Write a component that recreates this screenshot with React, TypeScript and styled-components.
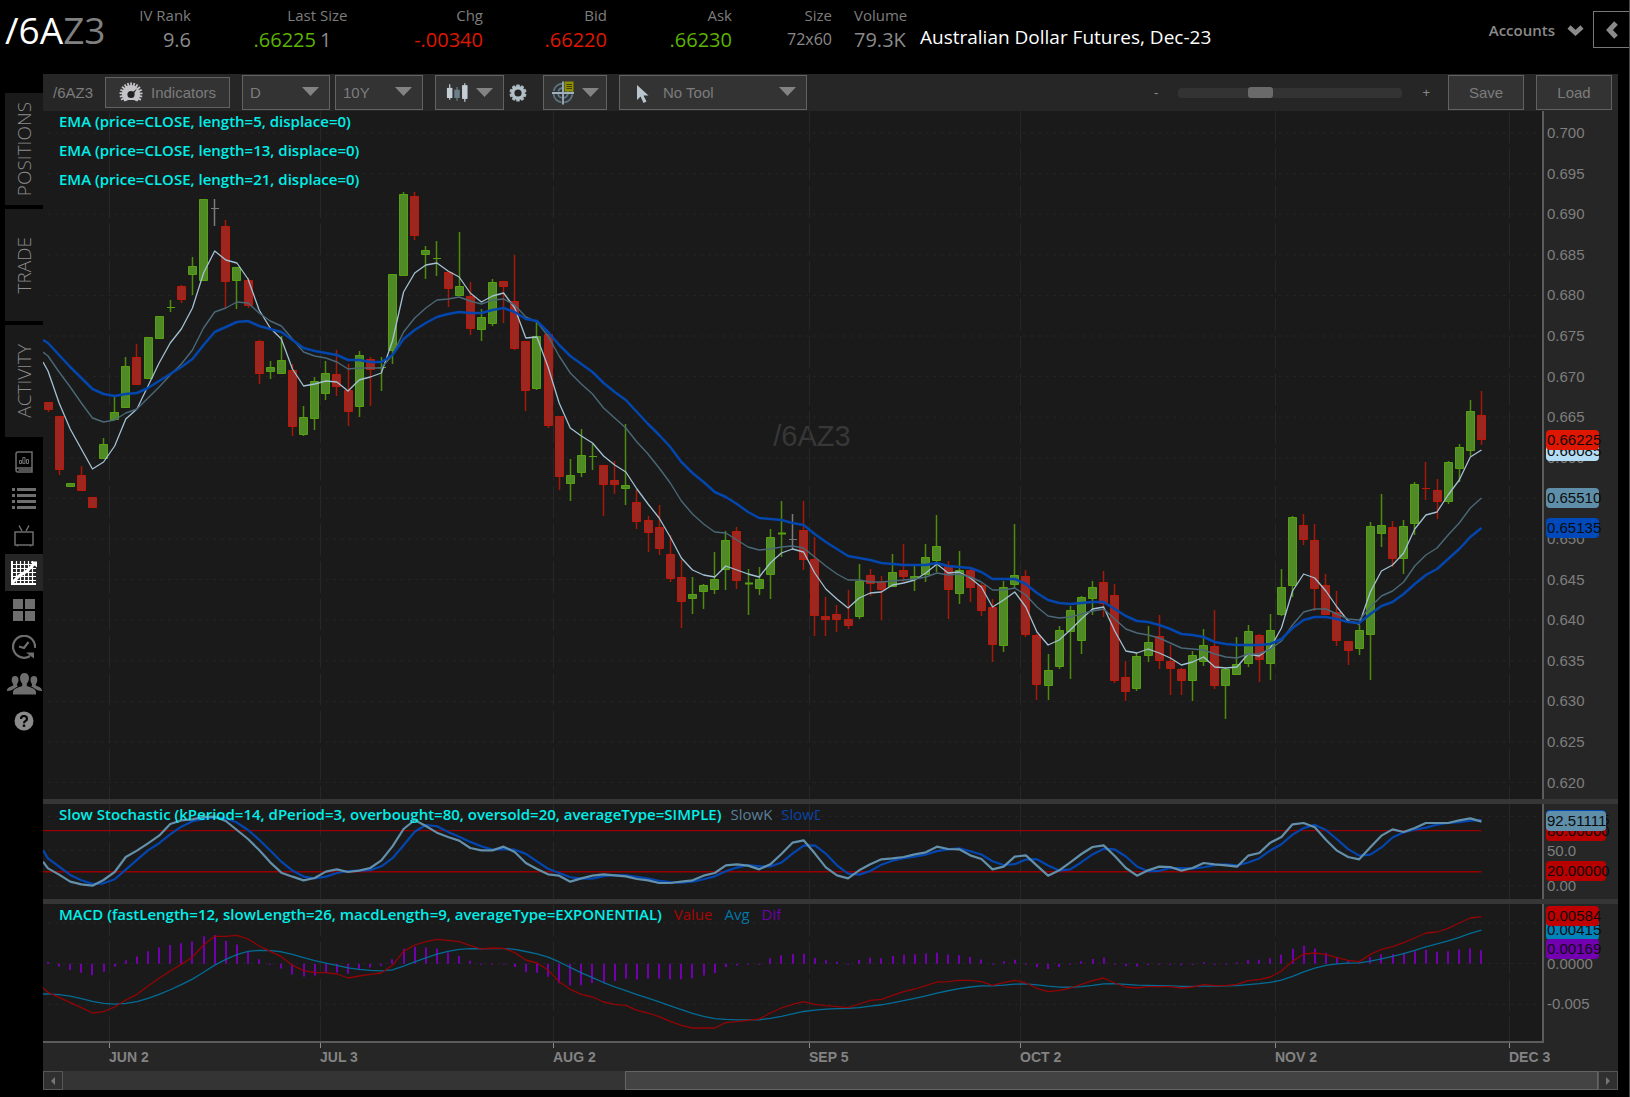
import React from "react";
import styled, { createGlobalStyle } from "styled-components";

/* ---------- data ---------- */

type Dir = "u" | "d" | "n";
/* direction, high, body top, body bottom, low */
type Candle = [Dir, number, number, number, number];

const candles: Candle[] = [
  ["d", 402, 402, 410, 412], ["d", 416, 416, 470, 475], ["u", 483, 483, 487, 487], ["d", 466, 475, 491, 491],
  ["d", 497, 497, 508, 508], ["u", 438, 444, 459, 459], ["u", 397, 412, 420, 420], ["u", 357, 366, 408, 408],
  ["d", 344, 357, 385, 385], ["u", 337, 337, 379, 379], ["u", 316, 316, 339, 339], ["u", 300, 307, 307, 312],
  ["d", 285, 286, 300, 303], ["u", 257, 266, 275, 295], ["u", 199, 199, 281, 281], ["n", 199, 208, 208, 226],
  ["d", 220, 226, 282, 308], ["u", 267, 267, 281, 309], ["d", 278, 280, 306, 308], ["d", 340, 341, 374, 384],
  ["u", 361, 367, 372, 379], ["u", 336, 360, 374, 374], ["d", 364, 370, 427, 436], ["u", 406, 417, 435, 436],
  ["u", 377, 381, 419, 430], ["u", 361, 373, 394, 400], ["d", 350, 374, 387, 396], ["d", 364, 390, 412, 426],
  ["u", 351, 355, 407, 417], ["d", 357, 359, 370, 406], ["u", 357, 367, 367, 391], ["u", 274, 274, 351, 364],
  ["u", 192, 194, 276, 276], ["d", 192, 196, 236, 240], ["u", 246, 250, 255, 279], ["u", 241, 258, 258, 276],
  ["d", 272, 272, 289, 307], ["u", 232, 286, 296, 296], ["d", 282, 296, 329, 335], ["u", 309, 317, 330, 341],
  ["u", 279, 282, 324, 326], ["d", 281, 281, 287, 323], ["d", 255, 301, 349, 350], ["d", 341, 341, 391, 411],
  ["u", 321, 336, 389, 390], ["d", 332, 334, 426, 428], ["d", 416, 416, 477, 490], ["u", 459, 475, 484, 501],
  ["u", 429, 455, 473, 477], ["u", 444, 456, 456, 470], ["d", 465, 465, 485, 516], ["d", 461, 480, 485, 494],
  ["u", 424, 485, 489, 505], ["d", 490, 502, 522, 529], ["d", 516, 520, 533, 552], ["d", 505, 527, 549, 555],
  ["d", 535, 554, 579, 582], ["d", 560, 577, 602, 628], ["u", 577, 594, 599, 614], ["u", 584, 585, 592, 609],
  ["u", 552, 579, 590, 594], ["u", 531, 540, 570, 590], ["d", 527, 531, 581, 589], ["u", 569, 583, 584, 615],
  ["u", 567, 579, 589, 595], ["u", 529, 537, 575, 599], ["u", 501, 533, 534, 557], ["n", 514, 539, 539, 550],
  ["d", 501, 530, 560, 570], ["d", 537, 559, 616, 636], ["d", 597, 616, 620, 636], ["d", 605, 614, 620, 632],
  ["d", 590, 619, 626, 629], ["u", 564, 581, 617, 619], ["d", 569, 575, 584, 596], ["d", 576, 582, 590, 620],
  ["u", 554, 572, 587, 587], ["d", 544, 570, 577, 582], ["u", 565, 576, 579, 591], ["u", 544, 557, 575, 582],
  ["u", 515, 546, 561, 572], ["d", 561, 566, 590, 619], ["u", 551, 570, 594, 604], ["d", 567, 570, 588, 602],
  ["d", 583, 585, 611, 616], ["d", 599, 607, 645, 662], ["u", 581, 587, 646, 652], ["u", 524, 575, 585, 589],
  ["d", 570, 576, 635, 637], ["d", 634, 635, 685, 700], ["u", 654, 670, 686, 700], ["u", 626, 630, 667, 669],
  ["u", 606, 610, 632, 679], ["u", 596, 597, 641, 654], ["u", 581, 587, 599, 615], ["d", 571, 582, 604, 617],
  ["d", 584, 595, 681, 683], ["d", 661, 677, 692, 701], ["u", 653, 656, 689, 691], ["u", 626, 642, 656, 662],
  ["d", 615, 636, 661, 669], ["d", 645, 661, 669, 695], ["d", 668, 669, 681, 695], ["u", 651, 655, 681, 701],
  ["u", 629, 645, 662, 666], ["d", 610, 646, 686, 689], ["u", 668, 669, 686, 719], ["u", 637, 664, 675, 675],
  ["u", 625, 631, 664, 667], ["d", 634, 635, 660, 682], ["u", 614, 630, 664, 680], ["u", 569, 587, 615, 616],
  ["u", 516, 517, 586, 597], ["d", 514, 525, 540, 545], ["d", 524, 540, 589, 611], ["d", 574, 585, 615, 615],
  ["d", 591, 612, 641, 646], ["d", 641, 641, 651, 665], ["u", 625, 630, 649, 655], ["u", 522, 526, 635, 680],
  ["u", 494, 525, 534, 547], ["d", 521, 527, 559, 567], ["u", 520, 526, 559, 574], ["u", 482, 484, 524, 535],
  ["d", 462, 488, 488, 500], ["d", 479, 490, 502, 519], ["u", 461, 462, 502, 504], ["u", 444, 447, 469, 482],
  ["u", 400, 411, 451, 456], ["d", 391, 415, 440, 445],
];

/* The first entry of each average is its value at the left edge of the plot. */
const ema5 = [
  362, 371, 403, 429, 449, 469, 462, 446, 419, 409, 386, 363, 343, 329, 308, 273, 251, 260, 263, 279, 310, 328, 339,
  369, 386, 384, 381, 382, 391, 380, 377, 373, 341, 292, 273, 265, 263, 271, 277, 293, 302, 296, 293, 308, 338, 337,
  367, 403, 428, 436, 443, 456, 465, 472, 489, 504, 518, 537, 558, 570, 575, 577, 566, 570, 574, 577, 563, 553, 549,
  552, 573, 589, 599, 608, 598, 593, 592, 585, 583, 580, 573, 564, 573, 572, 578, 587, 607, 600, 592, 607, 632, 645,
  640, 630, 619, 609, 607, 631, 651, 653, 649, 653, 658, 665, 662, 657, 667, 668, 667, 654, 656, 648, 628, 591, 574,
  578, 591, 607, 621, 624, 592, 571, 565, 553, 529, 515, 512, 495, 480, 457, 450,
];

const ema13 = [
  352, 356, 372, 387, 403, 418, 422, 420, 413, 409, 398, 387, 375, 364, 350, 328, 312, 308, 302, 303, 313, 321, 326,
  339, 352, 356, 358, 362, 369, 368, 368, 368, 355, 332, 318, 308, 300, 299, 297, 301, 304, 300, 299, 305, 317, 322,
  336, 356, 373, 384, 394, 408, 418, 428, 442, 454, 468, 483, 501, 514, 524, 532, 533, 540, 547, 550, 549, 547, 546,
  548, 557, 566, 574, 580, 580, 582, 582, 581, 580, 579, 577, 573, 575, 574, 577, 582, 590, 590, 588, 595, 607, 616,
  618, 617, 614, 611, 609, 619, 629, 633, 635, 638, 643, 648, 649, 650, 654, 657, 658, 654, 654, 649, 641, 625, 612,
  609, 609, 614, 619, 620, 607, 596, 591, 582, 566, 555, 548, 535, 523, 508, 498,
];

const ema21 = [
  340, 343, 355, 367, 378, 389, 394, 396, 394, 393, 388, 381, 374, 367, 359, 345, 332, 327, 322, 321, 326, 329, 332,
  340, 348, 351, 353, 355, 360, 360, 362, 362, 355, 339, 330, 323, 317, 314, 312, 313, 313, 310, 308, 312, 319, 321,
  332, 345, 356, 364, 372, 383, 392, 400, 412, 424, 435, 447, 462, 473, 482, 492, 497, 504, 512, 518, 519, 520, 523,
  525, 534, 542, 549, 556, 558, 560, 563, 564, 565, 565, 565, 563, 566, 567, 568, 572, 579, 579, 579, 584, 593, 600,
  603, 604, 603, 602, 602, 609, 616, 621, 622, 625, 629, 634, 635, 637, 642, 644, 645, 645, 645, 644, 639, 628, 620,
  617, 617, 619, 622, 623, 614, 606, 602, 594, 584, 575, 569, 559, 549, 537, 528,
];

/* Slow %K; two bars of history lead the visible range so %D can be averaged. */
const slowK = [
  180, 201, 235, 254, 275, 283, 287, 270, 246, 201, 182, 160, 137, 102, 91, 88, 81, 80, 93, 120, 147, 180, 217, 248,
  260, 271, 264, 245, 238, 246, 242, 234, 211, 169, 117, 90, 108, 128, 141, 152, 174, 181, 181, 170, 186, 219, 237,
  253, 257, 275, 265, 257, 253, 256, 259, 267, 271, 279, 279, 275, 271, 257, 249, 226, 223, 227, 238, 223, 192, 158,
  151, 190, 232, 256, 265, 241, 223, 208, 205, 201, 193, 187, 170, 177, 178, 196, 207, 238, 230, 200, 196, 227, 257,
  241, 217, 192, 171, 166, 198, 234, 257, 241, 230, 231, 242, 234, 219, 223, 226, 230, 197, 189, 158, 141, 103, 99,
  112, 149, 182, 201, 208, 172, 137, 118, 126, 114, 99, 99, 99, 91, 85, 95,
];

const macdValue = [
  607, 622, 638, 653, 669, 665, 651, 630, 613, 588, 565, 543, 523, 501, 465, 439, 439, 436, 447, 468, 484, 500, 526,
  542, 548, 548, 552, 564, 558, 553, 549, 526, 484, 465, 455, 448, 451, 455, 467, 477, 474, 475, 488, 510, 519, 540,
  575, 598, 613, 621, 636, 643, 646, 661, 669, 680, 694, 706, 714, 714, 714, 698, 695, 691, 687, 669, 654, 643, 635,
  643, 647, 650, 653, 642, 631, 628, 616, 605, 597, 587, 576, 575, 571, 571, 575, 586, 578, 571, 579, 595, 605, 601,
  594, 583, 572, 564, 579, 591, 594, 590, 590, 590, 594, 591, 584, 587, 587, 583, 572, 569, 561, 543, 514, 492, 489,
  493, 503, 511, 515, 493, 478, 470, 458, 444, 429, 426, 415, 399, 384, 380,
];

const months = [
  { label: "JUN 2", x: 66 },
  { label: "JUL 3", x: 277 },
  { label: "AUG 2", x: 510 },
  { label: "SEP 5", x: 766 },
  { label: "OCT 2", x: 977 },
  { label: "NOV 2", x: 1232 },
  { label: "DEC 3", x: 1466 },
];

/* ---------- scales ---------- */

const PLOT_W = 1499;
const STEP = 11.112;
const barX = (i: number) => 5 + STEP * i;

interface Scale {
  top: number;
  span: number;
}
const priceScale: Scale = { top: 111, span: 688 };
const stochScale: Scale = { top: 42, span: 285 };
const macdScale: Scale = { top: 342, span: 411 };

const priceY = (p: number) => 133 + ((0.7 - p) / 0.005) * 40.6;
const pct = (y: number, s: Scale) => `${((y - s.top) / s.span) * 100}%`;
const priceTicks = Array.from({ length: 17 }, (_, i) => 0.7 - i * 0.005);

const line = (ys: number[]) => ys.map((y, i) => `${barX(i)},${y}`).join(" ");
const withLead = (ys: number[]) => `0,${ys[0]} ${line(ys.slice(1))}`;

const kLine = slowK.slice(2);
const dLine = kLine.map((k, i) => (k + slowK[i + 1] + slowK[i]) / 3);
const macdAvg: number[] = [];
macdValue.reduce((prev, v) => {
  const next = prev + (v - prev) * 0.2;
  macdAvg.push(next);
  return next;
}, 613);

/* ---------- styles ---------- */

const UI = `"Open Sans", "Noto Sans", sans-serif`;
const CHART = `"Liberation Sans", Arial, sans-serif`;

const Global = createGlobalStyle`
  *, *::before, *::after { box-sizing: border-box; }
  body { margin: 0; background: #000; font-family: ${UI}; }
  button, select, input { font: inherit; margin: 0; }
`;

const Page = styled.div`
  display: flex;
  flex-direction: column;
  min-height: 100vh;
  padding-bottom: 7px;
  background: #000;
  border-right: 1px solid #4c4c4c;
`;

const Header = styled.header`
  display: flex;
  align-items: flex-start;
  height: 74px;
  flex: none;
`;

const Ticker = styled.h1`
  flex: none;
  width: 111px;
  margin: 0;
  padding: 5px 0 0 5px;
  font-size: 37px;
  line-height: 50px;
  font-weight: 400;
  color: #fff;
  span {
    color: #808080;
  }
`;

const Quotes = styled.dl`
  display: flex;
  margin: 0;
  padding-top: 5px;
`;

const Quote = styled.div<{ $w: number; $left?: boolean; $lead?: number }>`
  flex: none;
  width: ${(p) => p.$w}px;
  margin-left: ${(p) => p.$lead ?? 0}px;
  text-align: ${(p) => (p.$left ? "left" : "right")};
  white-space: nowrap;
  dt {
    font-size: 15px;
    line-height: 20px;
    color: #7d7d7d;
  }
`;

const Value = styled.dd<{ $color?: string; $small?: boolean }>`
  margin: 0;
  font-size: ${(p) => (p.$small ? 16 : 20)}px;
  line-height: ${(p) => (p.$small ? 28 : 30)}px;
  color: ${(p) => p.$color ?? "#8a8a8a"};
`;

const Product = styled.p`
  flex: 1;
  margin: 0;
  padding: 24px 0 0 13px;
  font-size: 19px;
  line-height: 26px;
  color: #fff;
  white-space: nowrap;
`;

const Accounts = styled.button`
  display: flex;
  align-items: center;
  gap: 12px;
  margin-top: 18px;
  padding: 0;
  border: 0;
  background: none;
  color: #8a8a8a;
  font: 600 15px/24px ${UI};
`;

const Collapse = styled.button`
  display: flex;
  align-items: center;
  width: 36px;
  height: 37px;
  margin: 11px 0 0 9px;
  padding: 0 0 0 12px;
  border: 1px solid #777;
  border-right: 0;
  background: #000;
`;

const Body = styled.div`
  display: flex;
  flex: 1;
  padding-right: 11px;
`;

const Sidebar = styled.nav`
  display: flex;
  flex-direction: column;
  flex: none;
  width: 43px;
  padding: 19px 0 0 5px;
`;

const Tabs = styled.div`
  display: flex;
  flex-direction: column;
  gap: 4px;
  margin-bottom: 6px;
`;

const Tab = styled.button`
  display: flex;
  align-items: center;
  justify-content: center;
  height: 112px;
  padding: 0;
  border: 0;
  background: #1a1a1a;
  color: #8c8c8c;
  font-size: 19px;
  font-weight: 300;
  span {
    writing-mode: vertical-rl;
    transform: rotate(180deg);
  }
`;

const Tool = styled.button<{ $active?: boolean }>`
  display: flex;
  align-items: center;
  justify-content: center;
  height: 37px;
  padding: 0;
  border: 0;
  background: ${(p) => (p.$active ? "#262626" : "transparent")};
  color: ${(p) => (p.$active ? "#fff" : "#6e6e6e")};
  svg {
    flex: none;
  }
`;

const Workspace = styled.main`
  display: flex;
  flex-direction: column;
  flex: 1;
  min-width: 0;
  background: #262626;
  font-family: ${CHART};
  font-size: 15px;
`;

const Toolbar = styled.div`
  display: flex;
  align-items: center;
  gap: 12px;
  flex: none;
  height: 37px;
  padding: 0 6px 0 10px;
  color: #7c7c7c;
`;

const Group = styled.div<{ $gap: number; $push?: boolean }>`
  display: flex;
  align-items: center;
  gap: ${(p) => p.$gap}px;
  margin-left: ${(p) => (p.$push ? "auto" : 0)};
`;

const BoxButton = styled.button<{ $w: number; $short?: boolean }>`
  display: flex;
  align-items: center;
  justify-content: center;
  gap: 8px;
  width: ${(p) => p.$w}px;
  height: ${(p) => (p.$short ? 31 : 35)}px;
  padding: 0;
  border: 1px solid #626262;
  background: #333;
  color: #7c7c7c;
`;

const PlainButton = styled.button`
  display: flex;
  padding: 0 3px 0 0;
  border: 0;
  background: none;
`;

const Picker = styled.div<{ $w: number; $pad: number }>`
  position: relative;
  width: ${(p) => p.$w}px;
  height: 35px;
  select {
    appearance: none;
    width: 100%;
    height: 100%;
    padding: 0 30px 0 ${(p) => p.$pad}px;
    border: 1px solid #626262;
    border-radius: 0;
    background: #333;
    color: #7c7c7c;
  }
  > svg {
    position: absolute;
    pointer-events: none;
  }
`;

const PickerArrow = styled.svg`
  right: 11px;
  top: 12px;
`;

const PickerIcon = styled.svg`
  left: 17px;
  top: 9px;
`;

const Zoom = styled.div`
  display: flex;
  align-items: center;
  gap: 20px;
  margin-right: 6px;
  color: #8a8a8a;
  font-size: 13px;
`;

const Range = styled.input`
  appearance: none;
  width: 224px;
  height: 10px;
  border-radius: 4px;
  background: #333;
  &::-webkit-slider-thumb {
    appearance: none;
    width: 25px;
    height: 11px;
    border-radius: 3px;
    background: #6a6a6a;
  }
`;

const Pane = styled.section<{ $h?: number }>`
  display: flex;
  flex: ${(p) => (p.$h ? `0 0 ${p.$h}px` : "1 0 400px")};
  & + & {
    box-sizing: content-box;
    border-top: 5px solid #363636;
  }
`;

const Plot = styled.div`
  position: relative;
  flex: 1;
  min-width: 0;
  background: #1a1a1a;
  border-right: 2px solid #5c5c5c;
`;

const Drawing = styled.svg`
  position: absolute;
  inset: 0;
  width: 100%;
  height: 100%;
  overflow: hidden;
  line,
  polyline,
  rect {
    vector-effect: non-scaling-stroke;
  }
`;

const Watermark = styled.span`
  position: absolute;
  left: 51.3%;
  top: 47.3%;
  transform: translate(-50%, -50%);
  font-size: 29px;
  color: #373737;
`;

const Legend = styled.div`
  position: absolute;
  left: 16px;
  top: 0;
  display: flex;
  flex-direction: column;
  gap: 9px;
  font-family: ${UI};
  font-size: 15px;
  line-height: 20px;
  font-weight: 600;
  color: #00efe8;
  white-space: nowrap;
`;

const LegendRow = styled.div<{ $gap?: number }>`
  display: flex;
  gap: ${(p) => p.$gap ?? 9}px;
`;

const Series = styled.span<{ $color: string; $max?: number }>`
  font-weight: 400;
  color: ${(p) => p.$color};
  max-width: ${(p) => (p.$max ? `${p.$max}px` : "none")};
  overflow: hidden;
`;

const Axis = styled.div`
  position: relative;
  flex: none;
  width: 74px;
  color: #7e7e7e;
`;

const AxisLabel = styled.span`
  position: absolute;
  left: 3px;
  line-height: 20px;
  transform: translateY(-50%);
`;

const Tag = styled.span<{ $bg: string; $w?: number }>`
  position: absolute;
  left: 2px;
  width: ${(p) => p.$w ?? 53}px;
  height: 20px;
  padding-left: 1px;
  border-radius: 4px;
  line-height: 20px;
  transform: translateY(-50%);
  background: ${(p) => p.$bg};
  color: #0c0c0c;
`;

const Dates = styled.div`
  position: relative;
  flex: none;
  height: 30px;
  margin-right: 74px;
  border-top: 2px solid #5c5c5c;
`;

const DateLabel = styled.span`
  position: absolute;
  top: 0;
  padding-top: 6px;
  font-size: 14px;
  line-height: 16px;
  font-weight: 700;
  color: #838383;
  white-space: nowrap;
  &::before {
    content: "";
    position: absolute;
    left: 0;
    top: 0;
    width: 1px;
    height: 5px;
    background: #8a8a8a;
  }
`;

const Scroller = styled.div`
  display: flex;
  flex: none;
  height: 19px;
  background: #343434;
`;

const ScrollEnd = styled.button`
  display: flex;
  align-items: center;
  justify-content: center;
  width: 20px;
  padding: 0;
  border: 1px solid #565656;
  background: #303030;
`;

const ScrollSpace = styled.div`
  flex: 563;
`;

const ScrollThumb = styled.div`
  flex: 973;
  border: 1px solid #646464;
  background: #434343;
`;

/* ---------- icons ---------- */

const arrowShape = <path d="M0 0h17L8.500 9z" fill="#838383" />;

const Arrow = () => (
  <svg width="17" height="9" viewBox="0 0 17 9">
    {arrowShape}
  </svg>
);

const GaugeIcon = () => (
  <svg width="24" height="22" viewBox="0 0 24 22">
    {Array.from({ length: 15 }, (_, i) => {
      const a = ((150 + i * 17.2) * Math.PI) / 180;
      const c = Math.cos(a);
      const s = Math.sin(a);
      return (
        <line key={i} x1={12 + 7 * c} y1={12 + 7 * s} x2={12 + 11.5 * c} y2={12 + 11.5 * s} stroke="#c4c4c8" strokeWidth="1.800" />
      );
    })}
    <path d="M3 12a9 9 0 1 1 18 0c0 3-1 5-2.500 7.500l-4-1.500h-5l-4 1.500C4 17 3 15 3 12z" fill="#c4c4c8" />
    <circle cx="12" cy="12.500" r="3.600" fill="#222" />
    <path d="M11 12.500L18 6.500 13.500 14z" fill="#222" />
    <path d="M9 18h6l1 3H8z" fill="#333" />
  </svg>
);

const CandlesIcon = () => (
  <svg width="22" height="19" viewBox="0 0 24 20">
    <path d="M4 1v17M20.500 0v20" stroke="#b4c0c8" strokeWidth="1.500" />
    <path d="M12 4v15" stroke="#60737d" strokeWidth="1.500" />
    <rect x="1" y="5" width="6" height="11" fill="#c4ced4" />
    <rect x="9" y="7" width="6" height="9" fill="#6b7f8a" />
    <rect x="17.500" y="2" width="6" height="15" fill="#c4ced4" />
  </svg>
);

const GearIcon = () => (
  <svg width="20" height="18" viewBox="0 0 22 20">
    {[0, 36, 72, 108, 144].map((r) => (
      <rect key={r} x="9" y="0.500" width="4" height="19" rx="1" fill="#a9b7bf" transform={`rotate(${r} 11 10)`} />
    ))}
    <circle cx="11" cy="10" r="7.600" fill="#b4c0c8" />
    <circle cx="11" cy="10" r="4" fill="#262626" />
  </svg>
);

const CrosshairIcon = () => (
  <svg width="22" height="24" viewBox="0 0 22 24">
    <g fill="none" stroke="#5c7684" strokeWidth="1.800">
      <circle cx="11" cy="12" r="9.500" strokeDasharray="12 3" strokeDashoffset="-1.500" />
      <circle cx="11" cy="12" r="5" strokeDasharray="6 2" strokeDashoffset="-1" />
    </g>
    <path d="M11 0.500v23M0 12h22" stroke="#9db2bd" strokeWidth="1.800" />
    <rect x="12.500" y="0.500" width="9" height="10" fill="#8f8e00" />
    <path d="M14.500 3.500h5.500M14.500 5.500h5.500M14.500 7.500h5.500" stroke="#3f3f10" />
  </svg>
);

const ReportIcon = () => (
  <svg width="18" height="22" viewBox="0 0 18 22" fill="none" stroke="currentColor" strokeWidth="1.500">
    <path d="M17 17.500V1H3Q1 1 1 3v16q0 2 2 2h14v-4H3q-2 0-2 2M3.500 19h13" />
    <path d="M4.500 12.500V9.500h2v3zM7.800 12.500v-6h2.200v6zM11.500 12.500v-4h2v4z" strokeWidth="1" />
  </svg>
);

const ListIcon = () => (
  <svg width="24" height="22" viewBox="0 0 24 22" fill="currentColor">
    {[0, 6, 12, 18].map((y) => (
      <path key={y} d={`M0 ${y}h3v3h-3zM5 ${y}h19v3h-19z`} />
    ))}
  </svg>
);

const TvIcon = () => (
  <svg width="20" height="22" viewBox="0 0 20 22" fill="none" stroke="currentColor" strokeWidth="1.500">
    <rect x="1" y="7" width="18" height="13" />
    <path d="M5 0.500L8 6M15 0.500L12 6M3.500 20v1.500M16.500 20v1.500" />
  </svg>
);

const ChartIcon = () => (
  <svg width="26" height="24" viewBox="0 0 26 24" stroke="currentColor" fill="none">
    <path d="M1 0v23h24" strokeWidth="2" />
    <path d="M2 3.500h23M2 7.500h23M2 11.500h23M2 15.500h23M2 19.500h23M5.500 0v22M9.500 0v22M13.500 0v22M17.500 0v22M21.500 0v22" strokeWidth="1.200" />
    <path d="M1 22L8 15 16 10 24 2" strokeWidth="3" />
    <path d="M20 1h6v5z" fill="currentColor" />
  </svg>
);

const TilesIcon = () => (
  <svg width="22" height="22" viewBox="0 0 22 22" fill="currentColor">
    <path d="M0 0h10v10H0zM12 0h10v10H12zM0 12h10v10H0zM12 12h10v10H12z" />
  </svg>
);

const ClockIcon = () => (
  <svg width="24" height="24" viewBox="0 0 24 24" fill="none" stroke="currentColor" strokeWidth="2.200">
    <path d="M18 21A11 11 0 1 1 23 13" />
    <path d="M7 11.500l5 1.500 4.500-6" />
    <path d="M14 17.500l8 0v6z" fill="currentColor" stroke="none" />
  </svg>
);

const PeopleIcon = () => (
  <svg width="35" height="22" viewBox="0 0 35 22" fill="currentColor">
    <path d="M17.500 0c3 0 4.500 2 4.500 5 0 2.500-1 4.500-2.200 5.500v2.500c4 1.500 9 2.500 9.200 6v2.500H6V19c.2-3.500 5.200-4.500 9.200-6v-2.500C14 9.500 13 7.500 13 5c0-3 1.500-5 4.500-5z" />
    <path d="M8 3c2.300 0 3.500 1.500 3.500 4 0 1.800-.7 3-1.500 4v1.500l1 .7-6.500 4-3.500.8H0c0-3 1.500-3.500 6.200-5.500V11C5.300 10 4.700 8.800 4.700 7c0-2.500 1-4 3.300-4zM27 3c-2.300 0-3.500 1.500-3.500 4 0 1.800.7 3 1.500 4v1.500l-1 .7 6.500 4 3.500.8h1c0-3-1.500-3.500-6.200-5.500V11c.9-1 1.500-2.200 1.500-4 0-2.500-1-4-3.300-4z" />
  </svg>
);

const HelpIcon = () => (
  <svg width="20" height="20" viewBox="0 0 20 20">
    <circle cx="10" cy="10" r="9.500" fill="#8a8a8a" />
    <path d="M7 8q0-3 3-3t3 2.700q0 1.500-1.700 2.400Q10 10.800 10 12.300" fill="none" stroke="#000" strokeWidth="2.200" />
    <rect x="8.800" y="13.500" width="2.400" height="2.400" fill="#000" />
  </svg>
);

/* ---------- chart parts ---------- */

const candleColors: Record<Dir, { fill: string; edge: string; wick: string }> = {
  u: { fill: "#4f8a26", edge: "#57a00f", wick: "#4c8c0c" },
  d: { fill: "#9c2720", edge: "#bd1808", wick: "#a81808" },
  n: { fill: "#7a7a7a", edge: "#7a7a7a", wick: "#7a7a7a" },
};

function Grid({ scale, rows }: { scale: Scale; rows: number[] }) {
  return (
    <g stroke="#272727">
      {rows.map((y) => (
        <line key={y} x1="5" x2={PLOT_W - 4} y1={y} y2={y} strokeDasharray="3 4.500" stroke="#252525" />
      ))}
      {months.map((m) => (
        <line key={m.label} x1={m.x + 0.5} x2={m.x + 0.5} y1={scale.top} y2={scale.top + scale.span} strokeDasharray="32 5.500" />
      ))}
    </g>
  );
}

function Canvas({ scale, label, rows, children }: { scale: Scale; label: string; rows: number[]; children: React.ReactNode }) {
  return (
    <Drawing viewBox={`0 ${scale.top} ${PLOT_W} ${scale.span}`} preserveAspectRatio="none" role="img" aria-label={label}>
      <Grid scale={scale} rows={rows} />
      {children}
    </Drawing>
  );
}

function PricePane() {
  return (
    <Pane>
      <Plot>
        <Watermark>/6AZ3</Watermark>
        <Canvas scale={priceScale} label="Price" rows={priceTicks.map(priceY)}>
          {candles.map(([dir, high, top, bottom, low], i) => {
            const x = Math.floor(barX(i));
            const c = candleColors[dir];
            return (
              <g key={i}>
                <line x1={x + 0.5} x2={x + 0.5} y1={high} y2={low} stroke={c.wick} strokeWidth="1.500" />
                {bottom - top < 2 ? (
                  <line x1={x - 3} x2={x + 5} y1={top + 0.5} y2={top + 0.5} stroke={c.edge} strokeWidth={bottom - top + 1} />
                ) : (
                  <rect x={x - 3.5} y={top + 0.5} width="8" height={bottom - top - 1} fill={c.fill} stroke={c.edge} />
                )}
              </g>
            );
          })}
          <g fill="none" strokeLinejoin="round">
            <polyline points={withLead(ema5)} stroke="#a3c1d3" strokeWidth="1.300" />
            <polyline points={withLead(ema13)} stroke="#4a6877" strokeWidth="1.400" />
            <polyline points={withLead(ema21)} stroke="#0346ad" strokeWidth="2.500" />
          </g>
        </Canvas>
        <Legend>
          {[5, 13, 21].map((n) => (
            <LegendRow key={n}>{`EMA (price=CLOSE, length=${n}, displace=0)`}</LegendRow>
          ))}
        </Legend>
      </Plot>
      <Axis>
        {priceTicks.map((p) => (
          <AxisLabel key={p} style={{ top: pct(priceY(p), priceScale) }}>
            {p.toFixed(3)}
          </AxisLabel>
        ))}
        <Tag $bg="#0049ba" style={{ top: pct(priceY(0.65135), priceScale) }}>0.65135</Tag>
        <Tag $bg="#5f8ea8" style={{ top: pct(priceY(0.6551), priceScale) }}>0.65510</Tag>
        <Tag $bg="#b3dcf5" style={{ top: pct(priceY(0.66085), priceScale) }}>0.66085</Tag>
        <Tag $bg="#df1600" style={{ top: pct(priceY(0.66225), priceScale) }}>0.66225</Tag>
      </Axis>
    </Pane>
  );
}

function StochasticPane() {
  const end = barX(129);
  return (
    <Pane $h={95}>
      <Plot>
        <Canvas scale={stochScale} label="Slow Stochastic" rows={[80, 181, 286]}>
          <line x1="0" x2={end} y1="122" y2="122" stroke="#980000" strokeWidth="1.300" />
          <line x1="0" x2={end} y1="245" y2="245" stroke="#980000" strokeWidth="1.500" />
          <g fill="none" strokeLinejoin="round" strokeWidth="2.200">
            <polyline points={`0,180 ${line(dLine)}`} stroke="#0446b0" />
            <polyline points={`0,215 ${line(kLine)}`} stroke="#6390aa" />
          </g>
        </Canvas>
        <Legend>
          <LegendRow>
            <span>Slow Stochastic (kPeriod=14, dPeriod=3, overbought=80, oversold=20, averageType=SIMPLE)</span>
            <Series $color="#5a8099">SlowK</Series>
            <Series $color="#0a43a6" $max={39}>SlowD</Series>
          </LegendRow>
        </Legend>
      </Plot>
      <Axis>
        <AxisLabel style={{ top: pct(182, stochScale) }}>50.0</AxisLabel>
        <AxisLabel style={{ top: pct(288, stochScale) }}>0.00</AxisLabel>
        <Tag $bg="#b80000" $w={60} style={{ top: pct(244, stochScale) }}>20.00000</Tag>
        <Tag $bg="#b80000" $w={60} style={{ top: pct(122, stochScale) }}>80.00000</Tag>
        <Tag $bg="#0049ba" $w={60} style={{ top: pct(91, stochScale) }}>92.88135</Tag>
        <Tag $bg="#5f8ea8" $w={60} style={{ top: pct(94, stochScale) }}>92.51111</Tag>
      </Axis>
    </Pane>
  );
}

function MacdPane() {
  return (
    <Pane $h={137}>
      <Plot>
        <Canvas scale={macdScale} label="MACD" rows={[399, 521, 643]}>
          <g stroke="#7200ae" strokeWidth="2">
            {macdValue.map((v, i) => {
              const dif = v - macdAvg[i];
              const len = Math.abs(dif) < 3 ? 3 : dif;
              const x = Math.round(barX(i));
              return <line key={i} x1={x} x2={x} y1="521" y2={521 + len} />;
            })}
          </g>
          <g fill="none" strokeLinejoin="round" strokeWidth="1.300">
            <polyline points={`0,612 ${line(macdAvg)}`} stroke="#036c96" />
            <polyline points={`0,593 ${line(macdValue)}`} stroke="#930406" />
          </g>
        </Canvas>
        <Legend>
          <LegendRow $gap={12}>
            <span>MACD (fastLength=12, slowLength=26, macdLength=9, averageType=EXPONENTIAL)</span>
            <Series $color="#a80404">Value</Series>
            <Series $color="#0276a6">Avg</Series>
            <Series $color="#6e00ac">Dif</Series>
          </LegendRow>
        </Legend>
      </Plot>
      <Axis>
        <AxisLabel style={{ top: pct(521, macdScale) }}>0.0000</AxisLabel>
        <AxisLabel style={{ top: pct(643, macdScale) }}>-0.005</AxisLabel>
        <Tag $bg="#0083b8" style={{ top: pct(421, macdScale) }}>0.00415</Tag>
        <Tag $bg="#7200b0" style={{ top: pct(478, macdScale) }}>0.00169</Tag>
        <Tag $bg="#c00000" style={{ top: pct(379, macdScale) }}>0.00584</Tag>
      </Axis>
    </Pane>
  );
}

/* ---------- page ---------- */

const GREEN = "#5cb300";
const RED = "#df1600";

export default function App() {
  return (
    <>
      <Global />
      <Page>
        <Header>
          <Ticker>
            /6A<span>Z3</span>
          </Ticker>
          <Quotes>
            <Quote $w={80}><dt>IV Rank</dt><Value>9.6</Value></Quote>
            <Quote $w={125}><dt>Last</dt><Value $color={GREEN}>.66225</Value></Quote>
            <Quote $w={27} $left $lead={4}><dt>Size</dt><Value>1</Value></Quote>
            <Quote $w={136}><dt>Chg</dt><Value $color={RED}>-.00340</Value></Quote>
            <Quote $w={124}><dt>Bid</dt><Value $color={RED}>.66220</Value></Quote>
            <Quote $w={125}><dt>Ask</dt><Value $color={GREEN}>.66230</Value></Quote>
            <Quote $w={100}><dt>Size</dt><Value $small>72x60</Value></Quote>
            <Quote $w={53} $left $lead={22}><dt>Volume</dt><Value>79.3K</Value></Quote>
          </Quotes>
          <Product>Australian Dollar Futures, Dec-23</Product>
          <Accounts type="button">
            Accounts
            <svg width="17" height="11" viewBox="0 0 17 11">
              <path d="M2 2l6.500 6L15 2" fill="none" stroke="currentColor" strokeWidth="4.500" />
            </svg>
          </Accounts>
          <Collapse type="button" aria-label="Expand side panel">
            <svg width="12" height="18" viewBox="0 0 12 18">
              <path d="M10 2L3.500 9l6.500 7" fill="none" stroke="#8a8a8a" strokeWidth="5" />
            </svg>
          </Collapse>
        </Header>
        <Body>
          <Sidebar>
            <Tabs>
              {["POSITIONS", "TRADE", "ACTIVITY"].map((t) => (
                <Tab key={t} type="button"><span>{t}</span></Tab>
              ))}
            </Tabs>
            <Tool type="button" aria-label="Reports"><ReportIcon /></Tool>
            <Tool type="button" aria-label="Watchlist"><ListIcon /></Tool>
            <Tool type="button" aria-label="Television"><TvIcon /></Tool>
            <Tool type="button" aria-label="Charts" $active><ChartIcon /></Tool>
            <Tool type="button" aria-label="Grid"><TilesIcon /></Tool>
            <Tool type="button" aria-label="History"><ClockIcon /></Tool>
            <Tool type="button" aria-label="Follow"><PeopleIcon /></Tool>
            <Tool type="button" aria-label="Help"><HelpIcon /></Tool>
          </Sidebar>
          <Workspace>
            <Toolbar>
              <span>/6AZ3</span>
              <BoxButton type="button" $w={125} $short>
                <GaugeIcon />
                Indicators
              </BoxButton>
              <Group $gap={5}>
                <Picker $w={88} $pad={7}>
                  <select aria-label="Interval" defaultValue="D"><option>D</option></select>
                  <PickerArrow width="17" height="9" viewBox="0 0 17 9">{arrowShape}</PickerArrow>
                </Picker>
                <Picker $w={88} $pad={7}>
                  <select aria-label="Range" defaultValue="10Y"><option>10Y</option></select>
                  <PickerArrow width="17" height="9" viewBox="0 0 17 9">{arrowShape}</PickerArrow>
                </Picker>
              </Group>
              <Group $gap={4}>
                <BoxButton type="button" $w={69} aria-label="Chart style">
                  <CandlesIcon />
                  <Arrow />
                </BoxButton>
                <PlainButton type="button" aria-label="Chart settings"><GearIcon /></PlainButton>
              </Group>
              <BoxButton type="button" $w={64} aria-label="Crosshair">
                <CrosshairIcon />
                <Arrow />
              </BoxButton>
              <Picker $w={188} $pad={43}>
                <select aria-label="Drawing tool" defaultValue="No Tool"><option>No Tool</option></select>
                <PickerIcon width="14" height="20" viewBox="0 0 14 20">
                  <path d="M1 1v15l3.500-3.500L7.500 19l3-1.500-3-6H12.500z" fill="#b9c6ce" />
                </PickerIcon>
                <PickerArrow width="17" height="9" viewBox="0 0 17 9">{arrowShape}</PickerArrow>
              </Picker>
              <Group $gap={12} $push>
                <Zoom>
                  <span>-</span>
                  <Range type="range" aria-label="Zoom" min="0" max="100" defaultValue="35" />
                  <span>+</span>
                </Zoom>
                <BoxButton type="button" $w={76}>Save</BoxButton>
                <BoxButton type="button" $w={76}>Load</BoxButton>
              </Group>
            </Toolbar>
            <PricePane />
            <StochasticPane />
            <MacdPane />
            <Dates>
              {months.map((m) => (
                <DateLabel key={m.label} style={{ left: `${(m.x / 1501) * 100}%` }}>{m.label}</DateLabel>
              ))}
            </Dates>
            <Scroller>
              <ScrollEnd type="button" aria-label="Scroll left">
                <svg width="4" height="8" viewBox="0 0 4 8"><path d="M4 0v8L0 4z" fill="#777" /></svg>
              </ScrollEnd>
              <ScrollSpace />
              <ScrollThumb />
              <ScrollEnd type="button" aria-label="Scroll right">
                <svg width="4" height="8" viewBox="0 0 4 8"><path d="M0 0v8l4-4z" fill="#777" /></svg>
              </ScrollEnd>
            </Scroller>
          </Workspace>
        </Body>
      </Page>
    </>
  );
}
